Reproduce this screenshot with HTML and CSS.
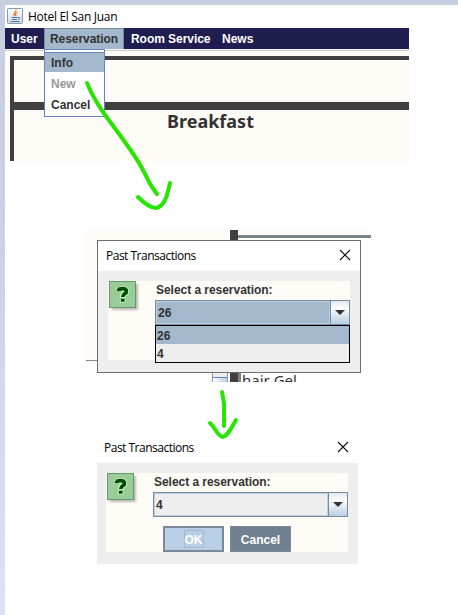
FILE: index.html
```html
<!DOCTYPE html>
<html lang="en">
<head>
<meta charset="utf-8">
<title>Hotel El San Juan</title>
<link rel="stylesheet" href="styles.css">
</head>
<body>
<main class="desk">
  <section class="app">
    <header class="titlebar">
      <svg class="java" width="16" height="16" viewBox="0 0 16 16">
        <defs><linearGradient id="jg" x1="0" y1="0" x2="0" y2="1"><stop offset="0" stop-color="#fff"/><stop offset="1" stop-color="#cbd7e3"/></linearGradient></defs>
        <rect x=".5" y=".5" width="15" height="15" rx="1" fill="url(#jg)" stroke="#8297b0"/>
        <path d="M9 1.8C9.8 4 5.2 4.8 7.3 8.2M10.6 4.2C8 5.2 8 6.2 9 8.2" fill="none" stroke="#e8782b" stroke-width="1.2"/>
        <path d="M4.5 9.5h6M5 11.5h5M3.5 13.5h9M11 9.5c2.4-.6 2.4 1.4 0 2" fill="none" stroke="#55789a" stroke-width="1"/>
      </svg>
      <span class="app-name">Hotel El San Juan</span>
    </header>
    <nav class="menubar">
      <span class="menu user">User</span>
      <div class="menu open">Reservation
        <div class="dropdown">
          <div class="item active">Info</div>
          <div class="item off">New</div>
          <div class="item">Cancel</div>
        </div>
      </div>
      <span class="menu room">Room Service</span>
      <span class="menu news">News</span>
    </nav>
    <div class="content">
      <div class="pane head"></div>
      <div class="pane"><h1>Breakfast</h1></div>
    </div>
  </section>

  <section class="stage">
    <div class="behind-top"><i class="post"></i><i class="rule"></i></div>
    <div class="behind-left"></div>
    <div class="behind-bottom"><i class="scroll"></i><i class="post low"></i><span class="gel">hair Gel</span></div>
    <div class="dialog framed">
      <div class="dialog-title"><span>Past Transactions</span>
        <svg class="close" width="12" height="12" viewBox="0 0 12 12"><path d="M1 1l10 10M11 1L1 11"/></svg>
      </div>
      <div class="dialog-body">
        <div class="question">
          <svg width="31" height="31" viewBox="0 0 31 31"><use href="#q"/></svg>
        </div>
        <div class="form">
          <div class="label">Select a reservation:</div>
          <div class="combo selected"><span class="value">26</span><span class="drop"></span></div>
          <div class="list"><div class="option picked">26</div><div class="option">4</div></div>
        </div>
      </div>
    </div>
  </section>

  <section class="dialog plain">
    <div class="dialog-title"><span>Past Transactions</span>
      <svg class="close" width="12" height="12" viewBox="0 0 12 12"><path d="M1 1l10 10M11 1L1 11"/></svg>
    </div>
    <div class="dialog-body">
      <div class="question">
        <svg width="31" height="31" viewBox="0 0 31 31">
          <defs>
            <filter id="sh" x="-20%" y="-20%" width="150%" height="150%"><feGaussianBlur stdDeviation="1"/></filter>
            <g id="q">
              <rect x="3" y="3" width="26" height="26" fill="#777" opacity=".5" filter="url(#sh)"/>
              <rect x=".5" y=".5" width="26" height="26" fill="#99cc99" stroke="#669966"/>
              <path d="M9.4 10.4C9.6 6.8 17.4 6.8 17.4 10.4C17.4 13 13.7 12.6 13.7 16M13.7 18v3.4" fill="none" stroke="#ccffcc" stroke-width="5.6"/>
              <path d="M9.4 10.2C9.6 6.8 17.4 6.8 17.4 10.4C17.4 13 13.7 12.6 13.7 16M13.7 17.6v3.2" fill="none" stroke="#004b00" stroke-width="3.8"/>
              <path d="M11 16.8h5.4" stroke="#ccffcc" stroke-width="1.2"/>
            </g>
          </defs>
          <use href="#q"/>
        </svg>
      </div>
      <div class="form">
        <div class="label">Select a reservation:</div>
        <div class="combo"><span class="value">4</span><span class="drop"></span></div>
        <div class="buttons"><button class="ok"><span>OK</span></button><button class="cancel">Cancel</button></div>
      </div>
    </div>
  </section>

  <svg class="ink" width="458" height="615" viewBox="0 0 458 615">
    <path d="M87 83C93 98 104 114 111 123C122 138 136 156 143 170C148 179 149 183 152 187L157 194M138 197C146 205 152 208 156 208C163 207 167 197 168 191L170 183"/>
    <path d="M222 392C223 399 225 403 224 411L224 426M210 423C215 427 217 436 223 437C228 435 230 430 236 420"/>
  </svg>
</main>
</body>
</html>
```

FILE: styles.css
```css
* { box-sizing: border-box; }
body { margin: 0; font: bold 12px/14px "Liberation Sans", Arial, sans-serif; color: #333; background: #fff; }
.desk { position: relative; width: 458px; height: 615px; overflow: hidden; padding: 5px 0 0 5px; background: linear-gradient(#fff, #fff) 5px 5px no-repeat, linear-gradient(#c6cfe0 0, #c9d2e4 35%, #dae3f1 100%); }
.app { width: 404px; height: 156px; }
.titlebar { display: flex; height: 23px; padding: 3px 0 0 2px; gap: 5px; }
.java { flex: none; }
.app-name { font: 12px/18px "Open Sans", "Noto Sans", sans-serif; color: #000; letter-spacing: -0.3px; white-space: nowrap; }
.menubar { display: flex; height: 21px; background: #201e50; color: #fff; line-height: 22px; }
.menu { flex: none; white-space: nowrap; }
.user { width: 39px; padding-left: 6px; }
.open { position: relative; width: 80px; padding-left: 5px; background: #a3b8cd; color: #333; border: 1px solid #7a8a99; border-bottom: 0; line-height: 20px; letter-spacing: -.05px; }
.room { width: 98px; padding-left: 7px; letter-spacing: -.05px; }
.news { width: 60px; }
.dropdown { position: absolute; z-index: 2; left: -1px; top: 20px; width: 61px; height: 68px; padding-top: 2px; background: #fff; border: 1px solid #6382bf; letter-spacing: 0; }
.item { height: 21px; padding-left: 6px; line-height: 24px; }
.item.active { height: 20px; background: #a3b8cd; border-top: 1px solid #6382bf; line-height: 20px; }
.item.off { color: #999; }
.content { display: flex; flex-direction: column; height: 112px; border-top: 1px solid #f4f4f7; background: linear-gradient(#ccc, #ccc) 0 0 / 100% 1px no-repeat #fffcf7; padding: 6px 0 0 5px; }
.pane { flex: 1; border-left: 4px solid #404040; text-align: center; }
.pane.head { flex: none; height: 54px; border-top: 4px solid #404040; border-bottom: 8px solid #404040; }
h1 { margin: 0; padding-right: 2px; font: bold 18px/22px "Noto Sans", "Open Sans", sans-serif; letter-spacing: 0; }

.stage { position: relative; width: 285px; height: 152px; margin: 69px 0 0 81px; overflow: hidden; padding: 10px 0 0 11px; }
.behind-top { position: absolute; inset: 0 0 auto 0; height: 10px; background: linear-gradient(#fffcf7 5px, #fff 5px) 152px 0 no-repeat #fffcf7; }
.behind-left { position: absolute; left: 0; top: 0; width: 11px; height: 131px; background: #fffcf7; border-bottom: 1px solid #7a8a99; }
.behind-bottom { position: absolute; left: 0; bottom: 0; width: 100%; height: 9px; }
.post { position: absolute; left: 144px; top: 0; width: 8px; height: 10px; background: #404040; }
.post.low { width: 11px; border-right: 3px solid #808080; }
.rule { position: absolute; left: 152px; right: 0; top: 5px; height: 3px; background: #808080; border-top: 1px solid #7a8a99; }
.scroll { position: absolute; left: 126px; top: 0; width: 16px; height: 9px; border: solid #7a9ccc; border-width: 0 1px; background: linear-gradient(#eee 4px, #6382bf 4px, #6382bf 5px, transparent 5px), linear-gradient(90deg, #fff, #b8cfe5); }
.gel { position: absolute; left: 156px; top: -2px; font: 15px/18px "Noto Sans", "Open Sans", sans-serif; white-space: nowrap; }
.dialog { position: relative; background: #eee; }
.dialog-title { display: flex; justify-content: space-between; height: 30px; background: #fff; color: #000; font: 12px/30px "Open Sans", "Noto Sans", sans-serif; letter-spacing: -.5px; }
.close { margin: 8px 9px 0 0; fill: none; stroke: #111; stroke-width: 1.1; }
.framed { width: 264px; height: 133px; border: 1px solid #6e6e6e; }
.framed .dialog-title { padding-left: 8px; }
.plain { width: 261px; height: 131px; margin: 51px 0 0 92px; }
.plain .dialog-title { padding-left: 7px; }
.dialog-body { display: flex; width: 242px; height: 79px; margin: 10px 0 0 10px; background: #fffcf7; }
.plain .dialog-body { margin-left: 9px; }
.question { width: 47px; padding-left: 1px; flex: none; }
.form { width: 195px; }
.label { height: 19px; padding-left: 1px; line-height: 18px; letter-spacing: -.04px; }
.combo { display: flex; height: 25px; border: 1px solid #7a8a99; background: #eee; line-height: 22px; }
.value { flex: 1; padding-left: 1px; border: 1px solid #b8cfe5; }
.selected .value { background: #a3b8cd; }
.drop { width: 19px; border-left: 1px solid #7a8a99; background: linear-gradient(#dde8f3, #fff 30%, #b8cfe5); display: flex; justify-content: center; align-items: center; }
.drop::after { content: ""; border: 5px solid transparent; border-top-color: #333; border-bottom: 0; }
.list { position: relative; height: 38px; border: 1px solid #000; background: #eee; }
.option { height: 18px; padding-left: 1px; line-height: 20px; }
.picked { background: #a3b8cd; }
.buttons { display: flex; gap: 6px; margin: 9px 0 0 10px; }
button { width: 61px; height: 26px; padding: 1px 0 0; font: inherit; color: #fff; background: #708090; border: 1px solid #7a8a99; }
.ok { padding: 0; background: #b8cfe5; border-width: 2px; }
.ok span { display: inline-block; padding: 2px 0 0; border: 1px solid #a3b8cd; line-height: 14px; }
.ink { position: absolute; z-index: 5; left: 0; top: 0; fill: none; stroke: #26e600; stroke-width: 4; stroke-linecap: round; stroke-linejoin: round; pointer-events: none; }
```
